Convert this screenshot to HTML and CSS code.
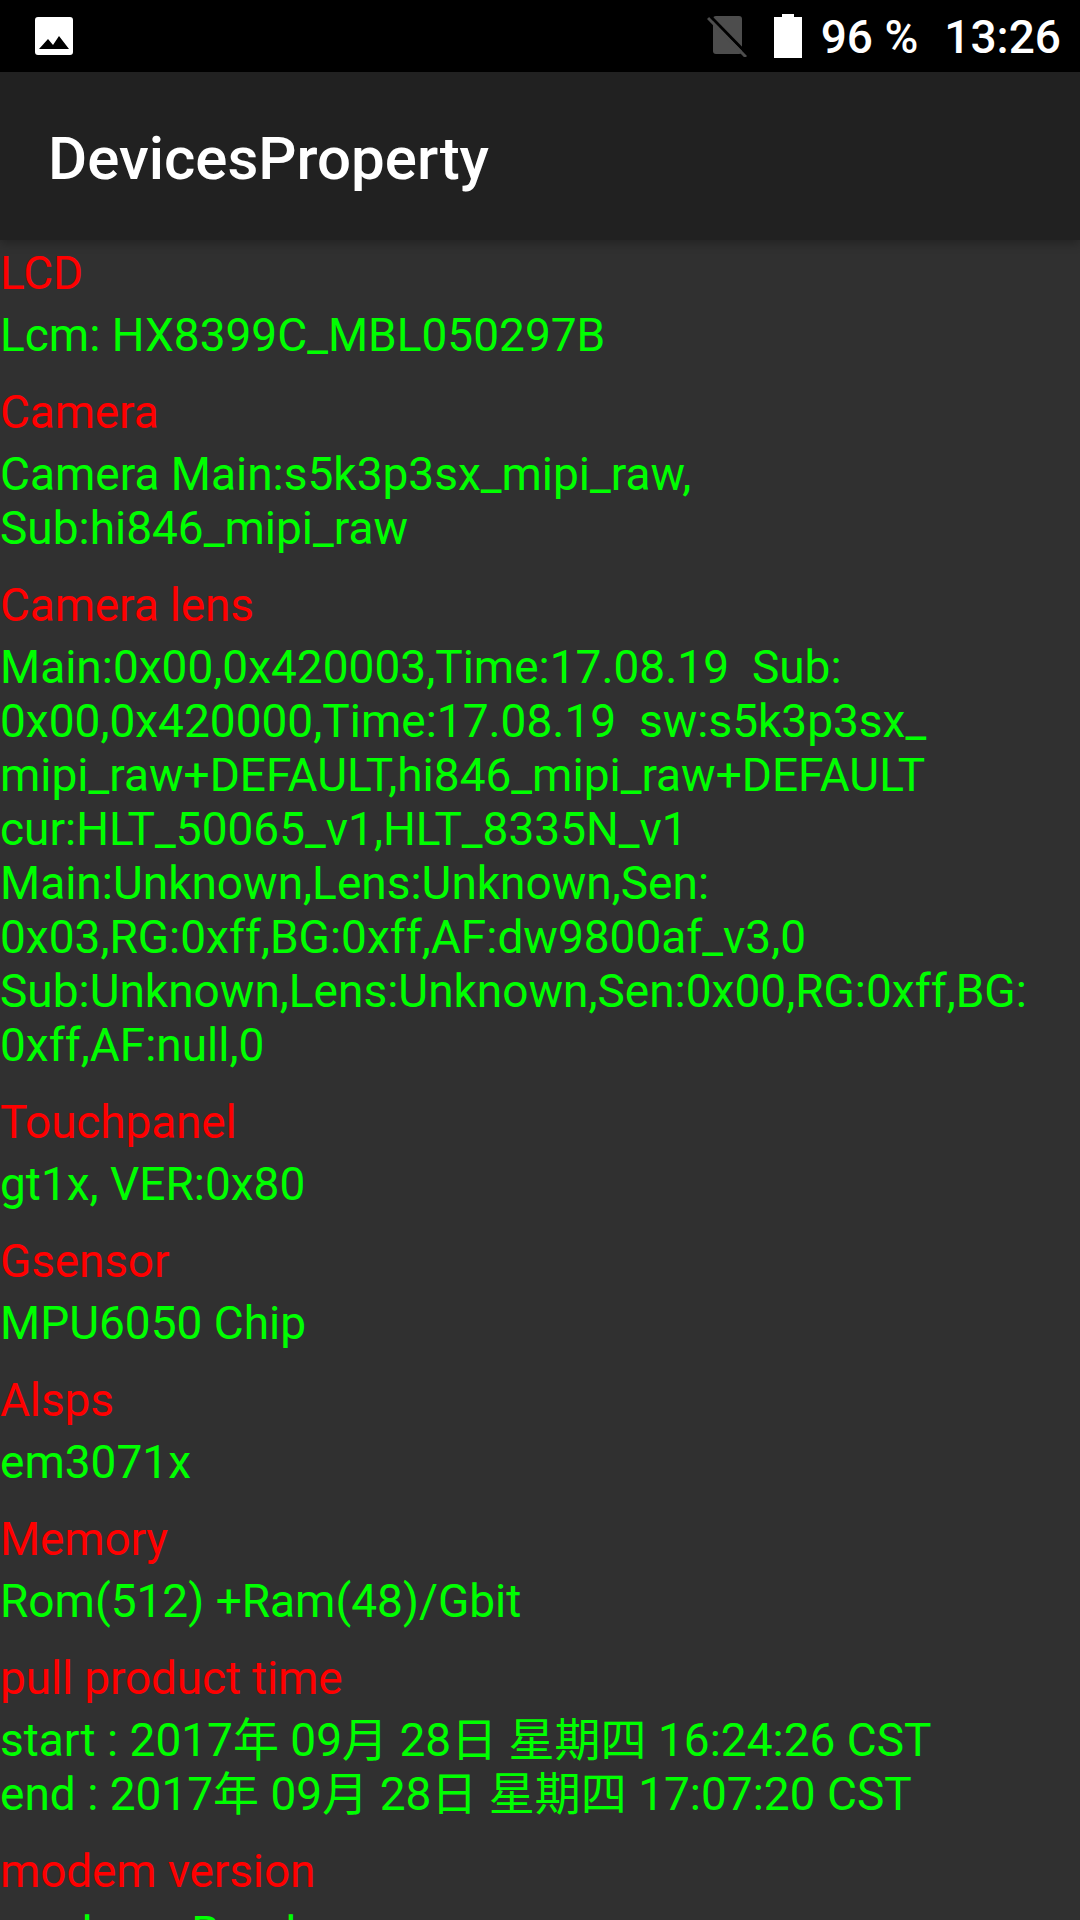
FILE: index.html
```html
<!DOCTYPE html>
<html lang="en">
<head>
  <meta charset="UTF-8">
  <title>DevicesProperty</title>
  <link rel="stylesheet" href="styles.css">
</head>
<body>
  <div class="status-bar">
    <svg class="icon-picture" viewBox="0 0 38 38">
      <path fill="#fff" fill-rule="evenodd" d="M3 0h32a3 3 0 0 1 3 3v32a3 3 0 0 1-3 3H3a3 3 0 0 1-3-3V3a3 3 0 0 1 3-3zM4 32h30L24 19l-6 9-5-6z"/>
    </svg>
    <div class="status-right">
      <svg class="icon-sim" viewBox="0 0 40 42">
        <path fill="#4d4d4d" d="M9 1h23a3 3 0 0 1 3 3v32a3 3 0 0 1-3 3H9a3 3 0 0 1-3-3V4a3 3 0 0 1 3-3z"/>
        <path stroke="#000" stroke-width="3" d="M3 1l37 38"/>
        <path stroke="#4d4d4d" stroke-width="3" d="M1 3l38 39"/>
      </svg>
      <svg class="icon-battery" viewBox="0 0 28 44">
        <path fill="#fff" d="M8 0h12v3h8v41H0V3h8z"/>
      </svg>
      <span class="status-text">96 %</span>
      <span class="status-text clock">13:26</span>
    </div>
  </div>
  <div class="toolbar">DevicesProperty</div>
  <div class="content">
    <div class="item">
      <div class="name">LCD</div>
      <div class="value">Lcm: HX8399C_MBL050297B</div>
    </div>
    <div class="item">
      <div class="name">Camera</div>
      <div class="value">Camera Main:s5k3p3sx_mipi_raw,<br>Sub:hi846_mipi_raw</div>
    </div>
    <div class="item">
      <div class="name">Camera lens</div>
      <div class="value">Main:0x00,0x420003,Time:17.08.19  Sub:<br>0x00,0x420000,Time:17.08.19  sw:s5k3p3sx_<br>mipi_raw+DEFAULT,hi846_mipi_raw+DEFAULT<br>cur:HLT_50065_v1,HLT_8335N_v1<br>Main:Unknown,Lens:Unknown,Sen:<br>0x03,RG:0xff,BG:0xff,AF:dw9800af_v3,0<br>Sub:Unknown,Lens:Unknown,Sen:0x00,RG:0xff,BG:<br>0xff,AF:null,0</div>
    </div>
    <div class="item">
      <div class="name">Touchpanel</div>
      <div class="value">gt1x, VER:0x80</div>
    </div>
    <div class="item">
      <div class="name">Gsensor</div>
      <div class="value">MPU6050 Chip</div>
    </div>
    <div class="item">
      <div class="name">Alsps</div>
      <div class="value">em3071x</div>
    </div>
    <div class="item">
      <div class="name">Memory</div>
      <div class="value">Rom(512) +Ram(48)/Gbit</div>
    </div>
    <div class="item">
      <div class="name">pull product time</div>
      <div class="value">start : 2017年 09月 28日 星期四 16:24:26 CST<br>end : 2017年 09月 28日 星期四 17:07:20 CST</div>
    </div>
    <div class="item">
      <div class="name">modem version</div>
      <div class="value">modem : Band</div>
    </div>
  </div>
</body>
</html>
```
FILE: styles.css
```css
html, body {
  margin: 0;
  height: 1920px;
  overflow: hidden;
}
body {
  background: #303030;
  font-family: Roboto, "Noto Sans CJK SC", sans-serif;
}
.status-bar {
  height: 72px;
  background: #000;
  display: flex;
  align-items: center;
  justify-content: space-between;
  padding: 0 19px 0 35px;
}
.icon-picture {
  width: 38px;
  height: 38px;
}
.status-right {
  display: flex;
  align-items: center;
}
.icon-sim {
  width: 40px;
  height: 42px;
  margin-right: 27px;
}
.icon-battery {
  width: 28px;
  height: 44px;
  margin-right: 19px;
}
.status-text {
  color: #fff;
  font-size: 46px;
  font-weight: 500;
  line-height: 60px;
  padding-top: 2px;
}
.clock {
  margin-left: 26px;
}
.toolbar {
  height: 168px;
  padding: 4px 0 0 48px;
  box-sizing: border-box;
  background: #212121;
  color: #fff;
  font-size: 60px;
  font-weight: 500;
  display: flex;
  align-items: center;
  box-shadow: 0 3px 10px rgba(0,0,0,0.3);
  position: relative;
}
.content {
  padding-top: 6px;
}
.item {
  margin-bottom: 23px;
}
.name {
  color: #ff0000;
  font-size: 46px;
  line-height: 54px;
  margin-bottom: 8px;
  letter-spacing: -0.15px;
}
.value {
  color: #00ff00;
  font-size: 46px;
  line-height: 54px;
  white-space: pre-wrap;
}
```
